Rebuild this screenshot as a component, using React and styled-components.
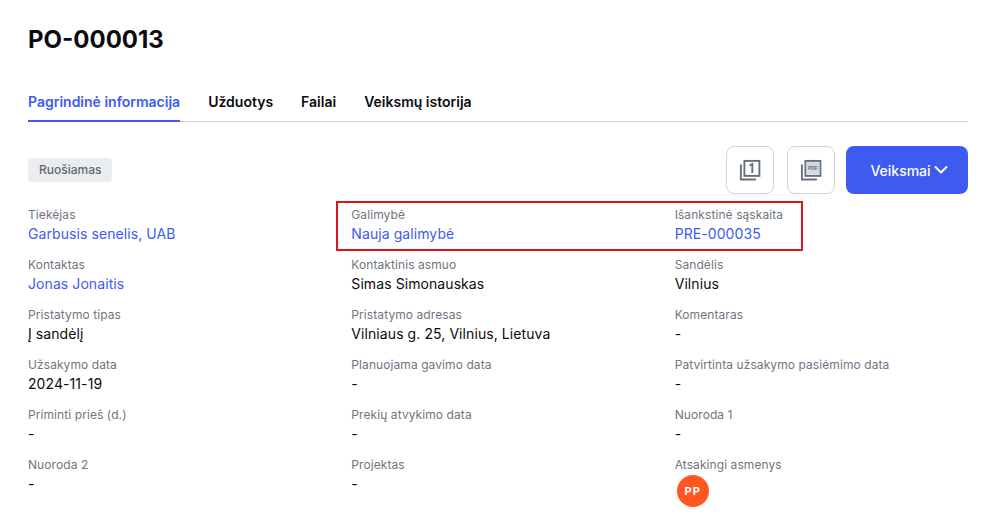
import React from 'react';
import styled, { createGlobalStyle } from 'styled-components';

const GlobalStyle = createGlobalStyle`
  html, body {
    margin: 0;
    padding: 0;
    background: #fff;
    font-family: Inter, "Noto Sans", sans-serif;
  }
`;

const Page = styled.div`
  width: 990px;
  height: 530px;
  box-sizing: border-box;
  padding: 24px 22px 0 28px;
  overflow: hidden;
`;

const Title = styled.h1`
  margin: 0;
  font-size: 24px;
  line-height: 31px;
  font-weight: 700;
  color: #0b0b0f;
`;

const Tabs = styled.div`
  display: flex;
  gap: 28px;
  margin-top: 29px;
  border-bottom: 1px solid #d0d0d3;
`;

const Tab = styled.div`
  padding: 8px 0 8px;
  margin-bottom: -1px;
  font-size: 14px;
  line-height: 20px;
  font-weight: 600;
  color: ${(p) => (p.$active ? '#3d5af1' : '#0b0b0f')};
  border-bottom: 2px solid ${(p) => (p.$active ? '#3d5af1' : 'transparent')};
`;

const Toolbar = styled.div`
  display: flex;
  align-items: center;
  justify-content: space-between;
  margin-top: 24px;
`;

const Badge = styled.span`
  padding: 0 11px;
  font-size: 12px;
  line-height: 24px;
  font-weight: 500;
  color: #5f6874;
  background: #ebecee;
  border-radius: 4px;
`;

const Actions = styled.div`
  display: flex;
  gap: 11px;
`;

const IconButton = styled.button`
  width: 48px;
  height: 48px;
  padding: 0;
  display: flex;
  align-items: center;
  justify-content: center;
  background: #fff;
  border: 1px solid #d3d3d6;
  border-radius: 8px;

  & + & {
    margin-left: 2px;
  }
`;

const PrimaryButton = styled.button`
  width: 122px;
  height: 48px;
  display: flex;
  align-items: center;
  justify-content: center;
  gap: 3px;
  padding: 0 0 0 4px;
  background: #3d5af1;
  border: 0;
  border-radius: 8px;
  color: #fff;
  font-family: inherit;
  font-size: 14px;
  font-weight: 500;
`;

const Details = styled.div`
  position: relative;
  display: grid;
  grid-template-columns: repeat(3, 1fr);
  column-gap: 30px;
  grid-auto-rows: 50px;
  margin-top: 7px;
`;

const Field = styled.div`
  padding-top: 6px;
`;

const Label = styled.div`
  font-size: 12px;
  line-height: 16px;
  letter-spacing: 0.08px;
  color: #70757f;
`;

const Value = styled.div`
  margin-top: 1px;
  font-size: 14px;
  line-height: 20px;
  letter-spacing: 0.08px;
  color: ${(p) => (p.$link ? '#3d5af1' : '#0b0b0f')};
`;

const Highlight = styled.div`
  position: absolute;
  left: 308px;
  top: 0;
  width: 463px;
  height: 46px;
  border: 2px solid #e0141c;
  pointer-events: none;
`;

const Avatar = styled.div`
  width: 32px;
  height: 32px;
  margin: 2px 0 0 2px;
  display: flex;
  align-items: center;
  justify-content: center;
  border-radius: 50%;
  background: #ff5722;
  color: #fff;
  font-size: 11px;
  font-weight: 700;
  letter-spacing: 1px;
`;

const StackIcon = ({ children }) => (
  <svg width="22" height="22" viewBox="0 0 22 22" fill="none">
    <path d="M1.9 5.5v15h15" stroke="#66707c" strokeWidth="1.9" />
    <rect x="5.4" y="1.9" width="15" height="15" stroke="#66707c" strokeWidth="1.9" />
    {children}
  </svg>
);

const Chevron = () => (
  <svg width="14" height="14" viewBox="0 0 14 14" fill="none">
    <path d="M1.5 4l5.5 5.5L12.5 4" stroke="#fff" strokeWidth="2" strokeLinecap="round" strokeLinejoin="round" />
  </svg>
);

const PdfMark = styled.text`
  font-family: "Liberation Sans", sans-serif;
  font-size: 5px;
  font-weight: 700;
  fill: #66707c;
`;

const fields = [
  { label: 'Tiekėjas', value: 'Garbusis senelis, UAB', link: true },
  { label: 'Galimybė', value: 'Nauja galimybė', link: true },
  { label: 'Išankstinė sąskaita', value: 'PRE-000035', link: true },
  { label: 'Kontaktas', value: 'Jonas Jonaitis', link: true },
  { label: 'Kontaktinis asmuo', value: 'Simas Simonauskas' },
  { label: 'Sandėlis', value: 'Vilnius' },
  { label: 'Pristatymo tipas', value: 'Į sandėlį' },
  { label: 'Pristatymo adresas', value: 'Vilniaus g. 25, Vilnius, Lietuva' },
  { label: 'Komentaras', value: '-' },
  { label: 'Užsakymo data', value: '2024-11-19' },
  { label: 'Planuojama gavimo data', value: '-' },
  { label: 'Patvirtinta užsakymo pasiėmimo data', value: '-' },
  { label: 'Priminti prieš (d.)', value: '-' },
  { label: 'Prekių atvykimo data', value: '-' },
  { label: 'Nuoroda 1', value: '-' },
  { label: 'Nuoroda 2', value: '-' },
  { label: 'Projektas', value: '-' },
];

const App = () => {
  return (
    <Page>
      <GlobalStyle />
      <Title>PO-000013</Title>
      <Tabs>
        <Tab $active>Pagrindinė informacija</Tab>
        <Tab>Užduotys</Tab>
        <Tab>Failai</Tab>
        <Tab>Veiksmų istorija</Tab>
      </Tabs>
      <Toolbar>
        <Badge>Ruošiamas</Badge>
        <Actions>
          <IconButton>
            <StackIcon>
              <path d="M10.5 6.5l2.8-1.5v9" stroke="#66707c" strokeWidth="1.9" />
            </StackIcon>
          </IconButton>
          <IconButton>
            <StackIcon>
              <rect x="6.6" y="3" width="12.6" height="12.6" fill="#d5d8dd" />
              <PdfMark x="12.9" y="11" textAnchor="middle">PDF</PdfMark>
            </StackIcon>
          </IconButton>
          <PrimaryButton>
            Veiksmai <Chevron />
          </PrimaryButton>
        </Actions>
      </Toolbar>
      <Details>
        <Highlight />
        {fields.map((f) => (
          <Field key={f.label}>
            <Label>{f.label}</Label>
            <Value $link={f.link}>{f.value}</Value>
          </Field>
        ))}
        <Field>
          <Label>Atsakingi asmenys</Label>
          <Avatar>PP</Avatar>
        </Field>
      </Details>
    </Page>
  );
};

export default App;
